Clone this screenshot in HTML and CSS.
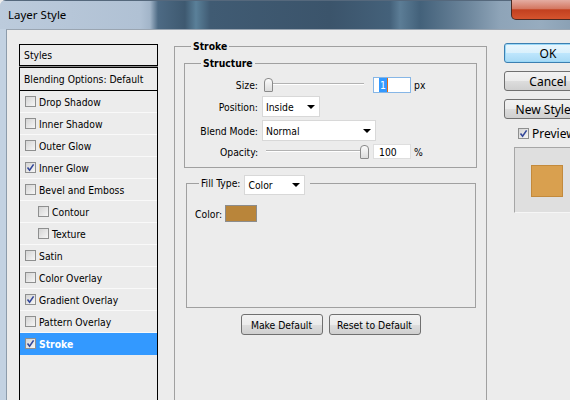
FILE: index.html
```html
<!DOCTYPE html>
<html>
<head>
<meta charset="utf-8">
<title>Layer Style</title>
<link rel="stylesheet" href="styles.css">
</head>
<body>
<div class="window">
  <div class="titlebar">
    <div class="title">Layer Style</div>
    <div class="close"></div>
  </div>
  <div class="frame">
    <div class="content">
      <div class="styles">
        <div class="styles-head">Styles</div>
        <div class="styles-gap"></div>
        <div class="styles-list">
          <div class="row-blend">Blending Options: Default</div>
          <div class="row"><span class="cb"></span><span>Drop Shadow</span></div>
          <div class="row"><span class="cb"></span><span>Inner Shadow</span></div>
          <div class="row"><span class="cb"></span><span>Outer Glow</span></div>
          <div class="row"><span class="cb"><svg viewBox="0 0 9 9" width="9" height="9"><path d="M1.5 4.5 L3.6 7.2 L7.6 1.4" fill="none" stroke="#33479a" stroke-width="1.6"/></svg></span><span>Inner Glow</span></div>
          <div class="row"><span class="cb"></span><span>Bevel and Emboss</span></div>
          <div class="row sub"><span class="cb"></span><span>Contour</span></div>
          <div class="row sub"><span class="cb"></span><span>Texture</span></div>
          <div class="row"><span class="cb"></span><span>Satin</span></div>
          <div class="row"><span class="cb"></span><span>Color Overlay</span></div>
          <div class="row"><span class="cb"><svg viewBox="0 0 9 9" width="9" height="9"><path d="M1.5 4.5 L3.6 7.2 L7.6 1.4" fill="none" stroke="#33479a" stroke-width="1.6"/></svg></span><span>Gradient Overlay</span></div>
          <div class="row"><span class="cb"></span><span>Pattern Overlay</span></div>
          <div class="row selected"><span class="cb"><svg viewBox="0 0 9 9" width="9" height="9"><path d="M1.5 4.5 L3.6 7.2 L7.6 1.4" fill="none" stroke="#33479a" stroke-width="1.6"/></svg></span><span>Stroke</span></div>
        </div>
      </div>

      <div class="middle">
        <fieldset class="stroke">
          <legend class="bold-legend">Stroke</legend>
          <div class="stroke-body">
            <fieldset class="structure">
              <legend class="bold-legend">Structure</legend>
              <div class="structure-body">
                <div class="field f-size">
                  <span class="label">Size:</span>
                  <span class="slider slider-min"><span class="thumb"></span></span>
                  <span class="num num-focus"><span class="sel-text">1</span></span>
                  <span class="unit">px</span>
                </div>
                <div class="field f-pos">
                  <span class="label">Position:</span>
                  <span class="select sel-pos"><span>Inside</span><svg class="arrow" viewBox="0 0 8 4" width="8" height="4"><polygon points="0,0 8,0 4,4" fill="#000"/></svg></span>
                </div>
                <div class="field f-blend">
                  <span class="label">Blend Mode:</span>
                  <span class="select sel-blend"><span>Normal</span><svg class="arrow" viewBox="0 0 8 4" width="8" height="4"><polygon points="0,0 8,0 4,4" fill="#000"/></svg></span>
                </div>
                <div class="field f-opacity">
                  <span class="label">Opacity:</span>
                  <span class="slider slider-max"><span class="thumb"></span></span>
                  <span class="num num-op">100</span>
                  <span class="unit">%</span>
                </div>
              </div>
            </fieldset>

            <fieldset class="fill">
              <legend class="fill-legend">
                <span>Fill Type:</span>
                <span class="select sel-fill"><span>Color</span><svg class="arrow" viewBox="0 0 8 4" width="8" height="4"><polygon points="0,0 8,0 4,4" fill="#000"/></svg></span>
              </legend>
              <div class="fill-body">
                <div class="color-row">
                  <span>Color:</span>
                  <span class="swatch"></span>
                </div>
              </div>
            </fieldset>

            <div class="btn-row">
              <span class="btn btn-make">Make Default</span>
              <span class="btn btn-reset">Reset to Default</span>
            </div>
          </div>
        </fieldset>
      </div>

      <div class="right">
        <div class="rbtn ok">OK</div>
        <div class="rbtn">Cancel</div>
        <div class="rbtn">New Style...</div>
        <div class="preview-row"><span class="cb"><svg viewBox="0 0 9 9" width="9" height="9"><path d="M1.5 4.5 L3.6 7.2 L7.6 1.4" fill="none" stroke="#33479a" stroke-width="1.6"/></svg></span><span>Preview</span></div>
        <div class="preview-box"><div class="preview-swatch"></div></div>
      </div>
    </div>
  </div>
</div>
</body>
</html>
```

FILE: styles.css
```css
* { box-sizing: border-box; }

html, body {
  margin: 0;
  width: 570px;
  height: 400px;
  overflow: hidden;
}

body {
  font-family: "DejaVu Sans Condensed", "DejaVu Sans", sans-serif;
  font-size: 10.3px;
  color: #000;
  background: #ececec;
}

.window {
  width: 570px;
  height: 400px;
  display: flex;
  flex-direction: column;
  background: #c3d2e2;
  border-top-left-radius: 6px;
  overflow: hidden;
}

.titlebar {
  height: 29px;
  flex: none;
  display: flex;
  align-items: flex-start;
  background: linear-gradient(90deg, #bccbdc 0px, #b0c1d4 140px, #a2b5c9 150px, #4d6a84 158px, #3e5970 185px, #5a8099 196px, #405b73 210px, #3b546b 330px, #44617a 390px, #5c7d96 400px, #43617a 420px, #6f889e 470px, #8ea4b8 500px, #97acbf 540px, #8ba1b5 570px);
  border-top: 1px solid #55687c;
}

.title {
  font-family: "Noto Sans", "Liberation Sans", sans-serif;
  font-size: 11.5px;
  padding: 6px 0 0 8px;
  color: #000;
}

.close {
  margin-left: auto;
  width: 60px;
  height: 20px;
  margin-top: -1px;
  margin-right: -1px;
  background: linear-gradient(#e4ada2, #d47862 45%, #c2401f 52%, #d4542e 100%);
  border: 1px solid #4a2a22;
  border-top: none;
  border-radius: 0 0 0 5px;
}

.frame {
  flex: 1;
  display: flex;
  padding-left: 6px;
  min-height: 0;
}

.content {
  flex: 1;
  min-width: 0;
  border-left: 1px solid #8d9cab;
  border-top: 1px solid #9aa5b1;
  background: #ececec;
  display: flex;
  align-items: flex-start;
  overflow: hidden;
}

/* Styles list */
.styles {
  flex: none;
  width: 139px;
  margin: 14px 0 0 12px;
}

.styles-head {
  height: 22px;
  border: 1px solid #000;
  display: flex;
  align-items: center;
  padding-left: 4px;
}

.styles-gap {
  height: 1px;
  background: #8a8a8a;
}

.styles-list {
  border: 1px solid #000;
  border-bottom: none;
  height: 400px;
}

.row-blend {
  height: 23px;
  border-bottom: 1px solid #000;
  display: flex;
  align-items: center;
  padding-left: 4px;
}

.row {
  height: 22px;
  border-bottom: 1px solid #f9f9f9;
  display: flex;
  align-items: center;
  gap: 3px;
  padding-left: 5px;
}

.row.sub { padding-left: 18px; }

.row.selected {
  background: #3399ff;
  border-bottom-color: #3399ff;
  color: #fff;
  font-weight: bold;
}

.cb {
  flex: none;
  width: 11px;
  height: 11px;
  border: 1px solid #8e8f8f;
  background: linear-gradient(135deg, #d4d4d4, #f6f6f6);
  display: flex;
  align-items: center;
  justify-content: center;
}

/* Middle column */
.middle {
  flex: none;
  width: 313px;
  margin: 10px 0 0 16px;
}

fieldset {
  margin: 0;
  padding: 0;
  border: 1px solid #a0a0a0;
  min-width: 0;
}

.bold-legend {
  margin-left: 16px;
  padding: 0 2px;
  font-weight: bold;
  line-height: 13px;
}

.stroke {
  height: 420px;
}

.stroke-body {
  padding: 4px 9px 0;
}

.structure-body {
  padding: 6px 0 7px 0;
}

.field {
  display: flex;
  align-items: center;
}

.label {
  flex: none;
  width: 73px;
  text-align: right;
}

.f-size { height: 17px; }
.f-pos { height: 21px; margin-top: 3px; }
.f-blend { height: 21px; margin-top: 3px; }
.f-opacity { height: 17px; margin-top: 2px; }

.slider {
  flex: none;
  height: 17px;
  margin-left: 6px;
  display: flex;
  align-items: center;
  background: linear-gradient(to bottom, transparent 7px, #b2b2b2 7px, #b2b2b2 8px, #ffffff 8px, #ffffff 9px, transparent 9px) no-repeat;
}

.slider-min {
  width: 102px;
  justify-content: flex-start;
  background-size: 100px 100%;
}

.slider-max {
  width: 105px;
  justify-content: flex-end;
  background-position: 2px 0;
  background-size: 96px 100%;
}

.thumb {
  width: 9px;
  height: 14px;
  border: 1px solid #8a8a8a;
  border-radius: 4px 4px 1px 1px;
  background: linear-gradient(#fbfbfb, #dcdcdc);
}

.num {
  flex: none;
  width: 38px;
  height: 16px;
  background: #fff;
  border: 1px solid #dedede;
  display: flex;
  align-items: center;
  padding-left: 5px;
}

.num-focus {
  margin-left: 7px;
  border-color: #86b6e6;
}

.num-op {
  margin-left: 4px;
  height: 15px;
}

.sel-text {
  background: #3399ff;
  color: #fff;
  padding: 0 1px;
  line-height: 14px;
  border-right: 1px solid #e06a1a;
}

.unit {
  margin-left: 3px;
}

.select {
  flex: none;
  display: flex;
  align-items: center;
  justify-content: space-between;
  background: #fff;
  border: 1px solid #d8d8d8;
  padding: 0 4px 0 3px;
  height: 21px;
}

.sel-pos { width: 58px; margin-left: 4px; }
.sel-blend { width: 114px; margin-left: 4px; }

.arrow { flex: none; }

/* Fill fieldset */
.fill {
  margin: 7px 1px 0 2px;
}

.fill-legend {
  margin-left: 12px;
  padding: 0 5px 0 2px;
  display: flex;
  align-items: center;
  gap: 4px;
}

.sel-fill {
  width: 61px;
  height: 20px;
  margin-bottom: -4px;
}

.fill-body {
  height: 116px;
  padding: 14px 0 0 8px;
}

.color-row {
  display: flex;
  align-items: center;
  gap: 3px;
  height: 17px;
}

.swatch {
  width: 32px;
  height: 17px;
  border: 1px solid #8c8c8c;
  background: #b9853a;
}

.btn-row {
  display: flex;
  justify-content: center;
  gap: 6px;
  margin-top: 6px;
}

.btn {
  height: 21px;
  display: flex;
  align-items: center;
  justify-content: center;
  border: 1px solid #707070;
  border-radius: 3px;
  background: linear-gradient(#f2f2f2 0%, #ebebeb 50%, #dddddd 51%, #cfcfcf 100%);
}

.btn-make { width: 82px; }
.btn-reset { width: 92px; }

/* Right column */
.right {
  flex: none;
  width: 88px;
  margin: 13px 0 0 17px;
  font-family: "Noto Sans", "Liberation Sans", sans-serif;
  font-size: 12px;
}

.rbtn {
  height: 20px;
  margin-bottom: 8px;
  display: flex;
  align-items: center;
  justify-content: center;
  white-space: nowrap;
  border: 1px solid #707070;
  border-radius: 3px;
  background: linear-gradient(#f2f2f2 0%, #ebebeb 50%, #dddddd 51%, #cfcfcf 100%);
}

.rbtn.ok {
  border-color: #3c7fb1;
  box-shadow: inset 0 0 0 1px #9ad8f7;
  background: linear-gradient(#eaf6fd 0%, #d9f0fc 50%, #bee6fd 51%, #a7d9f5 100%);
}

.preview-row {
  height: 13px;
  display: flex;
  align-items: center;
  gap: 3px;
  padding-left: 14px;
  white-space: nowrap;
}

.preview-box {
  width: 100px;
  height: 66px;
  margin: 7px 0 0 10px;
  background: #dfdfdf;
  border-left: 1px solid #a6a6a6;
  border-top: 1px solid #a6a6a6;
  border-bottom: 1px solid #f6f6f6;
  padding: 17px 0 0 16px;
}

.preview-swatch {
  width: 32px;
  height: 32px;
  border: 1px solid #c38a3c;
  background: #d9a04f;
}
```
